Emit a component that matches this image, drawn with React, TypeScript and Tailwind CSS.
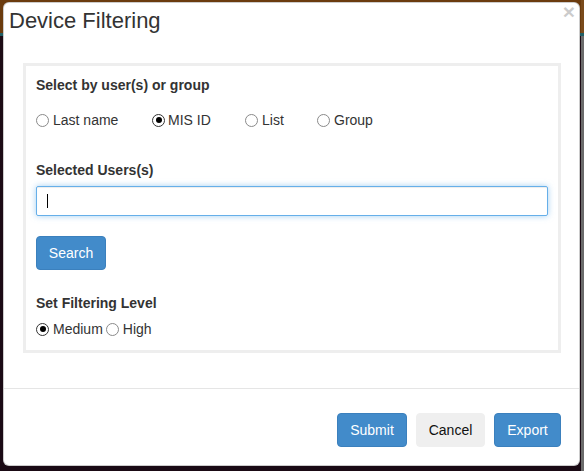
/**
 * Device Filtering — modal dialog for picking users and a filtering level.
 */
const FONT = "font-['Liberation_Sans',Arial,sans-serif]";

function Radio({ checked, label, gap = "gap-[4px]" }: { checked?: boolean; label: string; gap?: string }) {
  return (
    <label className={`flex items-center ${gap} text-[14px] leading-[20px] text-[#333]`}>
      <span
        className={`grid h-[13px] w-[13px] place-items-center rounded-full border bg-white ${
          checked ? "border-[#333]" : "border-[#8a8a8a]"
        }`}
      >
        {checked && <span className="h-[6px] w-[6px] rounded-full bg-black" />}
      </span>
      {label}
    </label>
  );
}

function Btn({ children, kind = "primary", w }: { children: string; kind?: "primary" | "plain"; w: string }) {
  const cls =
    kind === "primary"
      ? "bg-[#428bca] border-[#3b80bd] text-white"
      : "bg-[#efefef] border-[#efefef] text-[#111]";
  return (
    <button
      className={`h-[34px] ${w} rounded-[4px] border text-[14px] leading-[20px] ${cls}`}
    >
      {children}
    </button>
  );
}

export default function App() {
  return (
    <div className={`flex h-[471px] w-[584px] overflow-hidden ${FONT}`}>
      <div className="h-full w-[581px] bg-[linear-gradient(to_bottom,#6b3b0e_0,#6b3b0e_33px,#1f5f66_33px,#1f5f66_36px,#1c0b15_36px,#1a0a14_100%)] pl-[3px] pt-[2px]">
        <div className="relative flex h-[464px] w-[577px] flex-col rounded-[6px] border border-black/20 bg-white">
          <button className="absolute right-[4px] top-[-2px] text-[21px] font-bold leading-[21px] text-black opacity-20">
            ×
          </button>

          <h1 className="pl-[5px] pt-[6px] text-[22px] font-normal leading-[24px] text-[#333]">
            Device Filtering
          </h1>

          <div className="ml-[19px] mt-[30px] w-[538px] border-[3px] border-[#eeeeee] px-[10px] pb-[11px] pt-[9px]">
            <div className="text-[14px] font-bold leading-[20px] text-[#333]">Select by user(s) or group</div>
            <div className="mt-[15px] flex">
              <div className="w-[116px]">
                <Radio label="Last name" />
              </div>
              <div className="w-[93px]">
                <Radio checked label="MIS ID" gap="gap-[3px]" />
              </div>
              <div className="w-[72px]">
                <Radio label="List" />
              </div>
              <Radio label="Group" />
            </div>

            <div className="mt-[30px] text-[14px] font-bold leading-[20px] text-[#333]">Selected Users(s)</div>
            <div className="mt-[6px] flex h-[30px] w-[512px] items-center rounded-[2px] border border-[#66afe9] pl-[10px] shadow-[inset_0_1px_1px_rgba(0,0,0,0.075),0_0_6px_rgba(102,175,233,0.6)]">
              <span className="h-[14px] w-px bg-black" />
            </div>

            <div className="mt-[20px]">
              <Btn w="w-[70px]">Search</Btn>
            </div>

            <div className="mt-[23px] text-[14px] font-bold leading-[20px] text-[#333]">Set Filtering Level</div>
            <div className="mt-[6px] flex gap-[3px]">
              <Radio checked label="Medium" />
              <Radio label="High" />
            </div>
          </div>

          <div className="mt-[35px] border-t border-[#e5e5e5]" />

          <div className="flex justify-end gap-[9px] pr-[18px] pt-[24px]">
            <Btn w="w-[70px]">Submit</Btn>
            <Btn kind="plain" w="w-[69px]">Cancel</Btn>
            <Btn w="w-[67px]">Export</Btn>
          </div>
        </div>
      </div>
      <div className="h-full w-[3px] bg-[linear-gradient(to_bottom,#7a4a1a_0,#7a4a1a_33px,#1f5f66_33px,#1f5f66_36px,#6b6b6b_36px,#6b6b6b_100%)]" />
    </div>
  );
}
